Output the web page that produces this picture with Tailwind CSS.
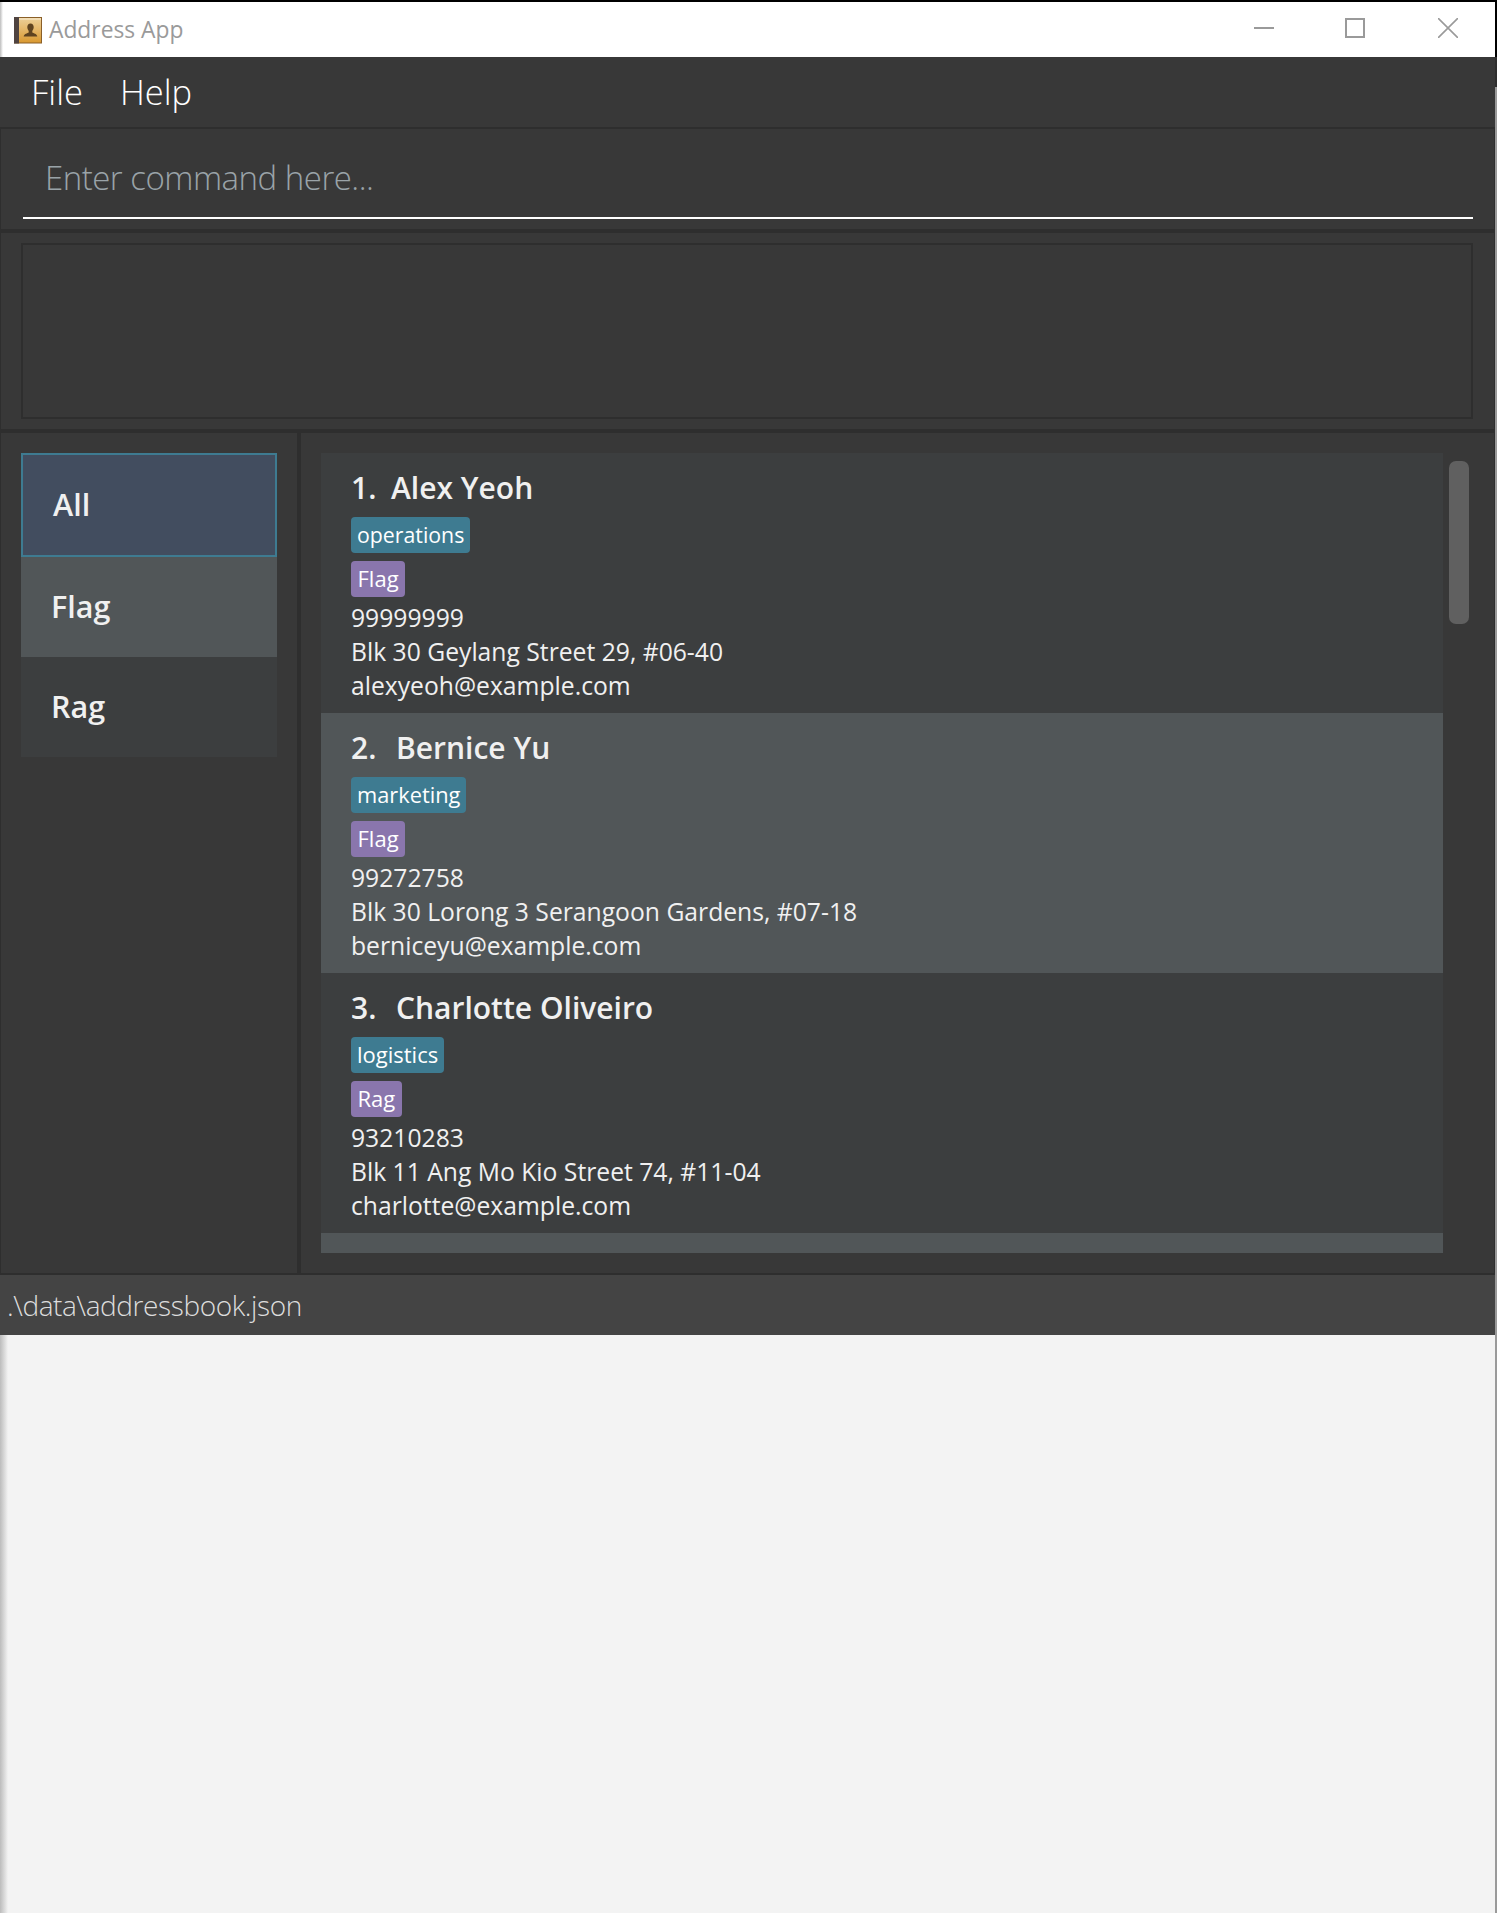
<!DOCTYPE html>
<html lang="en">
  <head>
    <meta charset="UTF-8" />
    <title>Address App</title>
    <script src="https://cdn.jsdelivr.net/npm/@tailwindcss/browser@4"></script>
  </head>
  <body class="h-[1913px] bg-[#f3f3f3] font-['Open_Sans',sans-serif] overflow-hidden">
    <div class="flex h-[1913px]">
      <div class="w-[1495px] flex flex-col">
        <!-- Title bar -->
        <div class="relative h-[57px] shrink-0 bg-white border-t-2 border-black flex items-center pl-[14px]">
          <div class="absolute left-0 top-0 w-[3px] h-[55px] bg-linear-to-r from-[#bdbdbd] to-white"></div>
          <svg width="28" height="27" viewBox="0 0 28 27" class="shrink-0 mt-[1px]">
            <defs>
              <linearGradient id="cover" x1="0" y1="0" x2="0" y2="1">
                <stop offset="0" stop-color="#ecd09a" />
                <stop offset="0.5" stop-color="#e4b566" />
                <stop offset="1" stop-color="#d9982f" />
              </linearGradient>
            </defs>
            <rect x="0.5" y="0.5" width="27" height="25.500" fill="url(#cover)" stroke="#8a5f28" />
            <rect x="1" y="1.500" width="26" height="1" fill="#f7ecd4" />
            <rect x="0" y="0" width="5" height="26.500" fill="#4f4340" />
            <path d="M16.500 6.500c2 0 3.200 1.500 3.200 3.600 0 1.600-.7 2.900-1.400 3.800v1.500c1 .8 5 1.300 5 4.100H9.700c0-2.800 4-3.300 5-4.100v-1.500c-.7-.9-1.400-2.200-1.400-3.800 0-2.100 1.200-3.600 3.200-3.600z" fill="#5f4320" />
          </svg>
          <span class="ml-[7px] pt-[2px] text-[22.8px] leading-none text-[#9a9a9a]">Address App</span>
          <div class="ml-auto flex items-center -mt-[3px]">
            <div class="w-[20px] h-[2px] bg-[#9a9a9a] mr-[71px]"></div>
            <div class="w-[20px] h-[20px] border-2 border-[#9a9a9a] mr-[73px]"></div>
            <svg width="20" height="20" viewBox="0 0 20 20" class="mr-[37px]"><path d="M0 0L20 20M20 0L0 20" stroke="#9a9a9a" stroke-width="1.600" /></svg>
          </div>
        </div>

        <!-- Menu -->
        <div class="h-[70px] shrink-0 bg-[#383838] flex items-center pl-[31px] gap-[37px] text-[34.500px] font-light text-white">
          <span>File</span>
          <span>Help</span>
        </div>

        <!-- Command box -->
        <div class="h-[106px] shrink-0 bg-[#383838] border-t-2 border-x border-[#2e2e2e] border-b-4 pl-[22px] pr-[21px] flex flex-col">
          <div class="h-[90px] shrink-0 border-b-2 border-white flex items-center pl-[22px] pt-[10px] text-[33px] tracking-[-0.5px] font-light text-[#9aa3a8]">
            Enter command here...
          </div>
        </div>

        <!-- Result display -->
        <div class="h-[200px] shrink-0 bg-[#383838] border-x border-[#2e2e2e] border-b-4 pt-[10px] px-[20px]">
          <div class="h-[176px] w-[1452px] border-2 border-[#2e2e2e]"></div>
        </div>

        <!-- Lists -->
        <div class="h-[842px] shrink-0 flex bg-[#383838] border-l border-b-2 border-[#2e2e2e]">
          <div class="w-[296px] shrink-0 pt-[20px] pl-[20px]">
            <div class="w-[256px] h-[104px] bg-[#424d5f] border-2 border-[#3e7b91] flex items-center pl-[30px] pb-[1px] text-[30.5px] font-semibold text-[#f0f0f0]">All</div>
            <div class="w-[256px] h-[100px] bg-[#515658] flex items-center pl-[30px] pb-[1px] text-[30.5px] font-semibold text-[#f0f0f0]">Flag</div>
            <div class="w-[256px] h-[100px] bg-[#3c3e3f] flex items-center pl-[30px] pb-[1px] text-[30.5px] font-semibold text-[#f0f0f0]">Rag</div>
          </div>
          <div class="w-[4px] shrink-0 bg-[#2e2e2e]"></div>
          <div class="relative flex-1 pt-[20px] pl-[20px] border-r border-[#2e2e2e]">
            <div class="w-[1122px] h-[800px] overflow-hidden">
              <div class="h-[260px] bg-[#3c3e3f] pl-[30px] flex flex-col text-white">
                <div class="h-[64px] pt-[13px] flex text-[30px] leading-[44px] font-semibold text-[#f0f0f0]"><span class="w-[40px]">1.</span><span>Alex Yeoh</span></div>
                <div class="flex"><span class="h-[36px] px-[6px] rounded-[4px] bg-[#3e7b91] text-[21.3px] leading-[35px] font-medium">operations</span></div>
                <div class="flex mt-[8px]"><span class="h-[36px] px-[6.500px] rounded-[4px] bg-[#8a76ad] text-[22px] leading-[35px] font-medium">Flag</span></div>
                <div class="mt-[4px] text-[24.7px] leading-[34px] text-[#f0f0f0]">99999999</div>
                <div class="text-[24.7px] leading-[34px] text-[#f0f0f0]">Blk 30 Geylang Street 29, #06-40</div>
                <div class="text-[24.7px] leading-[34px] text-[#f0f0f0]">alexyeoh@example.com</div>
              </div>
              <div class="h-[260px] bg-[#515658] pl-[30px] flex flex-col text-white">
                <div class="h-[64px] pt-[13px] flex text-[30px] leading-[44px] font-semibold text-[#f0f0f0]"><span class="w-[45px]">2.</span><span>Bernice Yu</span></div>
                <div class="flex"><span class="h-[36px] px-[6px] rounded-[4px] bg-[#3e7b91] text-[21.8px] leading-[35px] font-medium">marketing</span></div>
                <div class="flex mt-[8px]"><span class="h-[36px] px-[6.500px] rounded-[4px] bg-[#8a76ad] text-[22px] leading-[35px] font-medium">Flag</span></div>
                <div class="mt-[4px] text-[24.7px] leading-[34px] text-[#f0f0f0]">99272758</div>
                <div class="text-[24.7px] leading-[34px] text-[#f0f0f0]">Blk 30 Lorong 3 Serangoon Gardens, #07-18</div>
                <div class="text-[24.7px] leading-[34px] text-[#f0f0f0]">berniceyu@example.com</div>
              </div>
              <div class="h-[260px] bg-[#3c3e3f] pl-[30px] flex flex-col text-white">
                <div class="h-[64px] pt-[13px] flex text-[30px] leading-[44px] font-semibold text-[#f0f0f0]"><span class="w-[45px]">3.</span><span>Charlotte Oliveiro</span></div>
                <div class="flex"><span class="h-[36px] px-[6px] rounded-[4px] bg-[#3e7b91] text-[22px] leading-[35px] font-medium">logistics</span></div>
                <div class="flex mt-[8px]"><span class="h-[36px] px-[6.500px] rounded-[4px] bg-[#8a76ad] text-[22px] leading-[35px] font-medium">Rag</span></div>
                <div class="mt-[4px] text-[24.7px] leading-[34px] text-[#f0f0f0]">93210283</div>
                <div class="text-[24.7px] leading-[34px] text-[#f0f0f0]">Blk 11 Ang Mo Kio Street 74, #11-04</div>
                <div class="text-[24.7px] leading-[34px] text-[#f0f0f0]">charlotte@example.com</div>
              </div>
              <div class="h-[20px] bg-[#515658]"></div>
            </div>
            <!-- Scrollbar thumb -->
            <div class="absolute top-[28px] left-[1148px] w-[20px] h-[163px] rounded-[7px] bg-[#606060]"></div>
          </div>
        </div>

        <!-- Status bar -->
        <div class="h-[60px] shrink-0 bg-[#444444] flex items-center pl-[7px] text-[28px] tracking-[-0.4px] font-light text-[#dddddd]">.\data\addressbook.json</div>

        <!-- Empty window area with left shadow -->
        <div class="flex-1 flex">
          <div class="w-[8px] bg-linear-to-r from-[#bcbcbc] to-[#f3f3f3]"></div>
        </div>
      </div>
      <!-- Right window edge -->
      <div class="w-[2px] flex flex-col">
        <div class="h-[57px] bg-black"></div>
        <div class="h-[30px] bg-[#2e2e2e]"></div>
        <div class="flex-1 bg-[#9a9a9a]"></div>
      </div>
    </div>
  </body>
</html>
